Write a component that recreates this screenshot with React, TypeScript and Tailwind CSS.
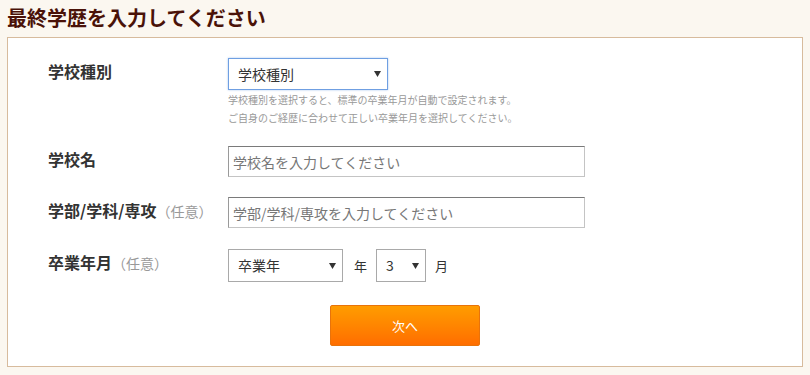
const font = { fontFamily: '"Noto Sans CJK JP", "Noto Sans", sans-serif' };

function Arrow() {
  return (
    <svg width="7" height="6" viewBox="0 0 7 6" className="shrink-0">
      <path d="M0 0 L7 0 L3.5 6 Z" fill="#333" />
    </svg>
  );
}

function FakeSelect({
  value,
  className,
}: {
  value: string;
  className: string;
}) {
  return (
    <div
      className={`flex items-center justify-between bg-white pl-[9px] pr-[6px] text-[14px] text-[#333] ${className}`}
    >
      <span>{value}</span>
      <Arrow />
    </div>
  );
}

function Label({ text, optional }: { text: string; optional?: boolean }) {
  return (
    <div className="w-[180px] shrink-0 pt-[2px] text-[16px] leading-[22px] font-bold text-[#333]">
      {text}
      {optional && (
        <span className="text-[14px] font-normal text-[#999]">（任意）</span>
      )}
    </div>
  );
}

function TextInput({ placeholder }: { placeholder: string }) {
  return (
    <input
      placeholder={placeholder}
      className="w-[357px] h-[31px] border border-[#c4c4c4] border-t-[#7a7a7a] border-l-[#9a9a9a] bg-white px-[4px] text-[14px] text-[#333] placeholder:text-[#777] outline-none"
      style={font}
    />
  );
}

export default function App() {
  return (
    <div className="w-[810px] h-[375px] bg-[#fbf7f0] overflow-hidden" style={font}>
      <h1 className="px-[7px] pt-[4px] mb-[5px] text-[20px] leading-[28px] font-bold text-[#4a1208]">
        最終学歴を入力してください
      </h1>
      <div className="mx-[7px] border border-[#d7bb9d] bg-white pt-[20px] pb-[20px]">
        <div className="pl-[40px] flex flex-col">
          <div className="flex">
            <Label text="学校種別" />
            <div className="flex flex-col">
              <FakeSelect
                value="学校種別"
                className="w-[160px] h-[32px] border border-[#6f9fe2] shadow-[0_0_2px_#a9c6f0]"
              />
              <div className="mt-[1px] text-[10px] leading-[18px] text-[#999]">
                <p>学校種別を選択すると、標準の卒業年月が自動で設定されます。</p>
                <p>ご自身のご経歴に合わせて正しい卒業年月を選択してください。</p>
              </div>
            </div>
          </div>

          <div className="flex mt-[19px]">
            <Label text="学校名" />
            <TextInput placeholder="学校名を入力してください" />
          </div>

          <div className="flex mt-[20px]">
            <Label text="学部/学科/専攻" optional />
            <TextInput placeholder="学部/学科/専攻を入力してください" />
          </div>

          <div className="flex mt-[21px]">
            <Label text="卒業年月" optional />
            <div className="flex items-center text-[13px] text-[#333]">
              <FakeSelect
                value="卒業年"
                className="w-[115px] h-[33px] border border-[#a9a9a9]"
              />
              <span className="ml-[11px] mr-[9px]">年</span>
              <FakeSelect
                value="3"
                className="w-[50px] h-[33px] border border-[#a9a9a9]"
              />
              <span className="ml-[9px]">月</span>
            </div>
          </div>
        </div>

        <div className="flex justify-center mt-[23px]">
          <button className="w-[150px] h-[41px] rounded-[2px] border border-[#e8730a] bg-gradient-to-b from-[#ff9c00] to-[#ff6d00] text-[13px] text-white">
            次へ
          </button>
        </div>
      </div>
    </div>
  );
}
